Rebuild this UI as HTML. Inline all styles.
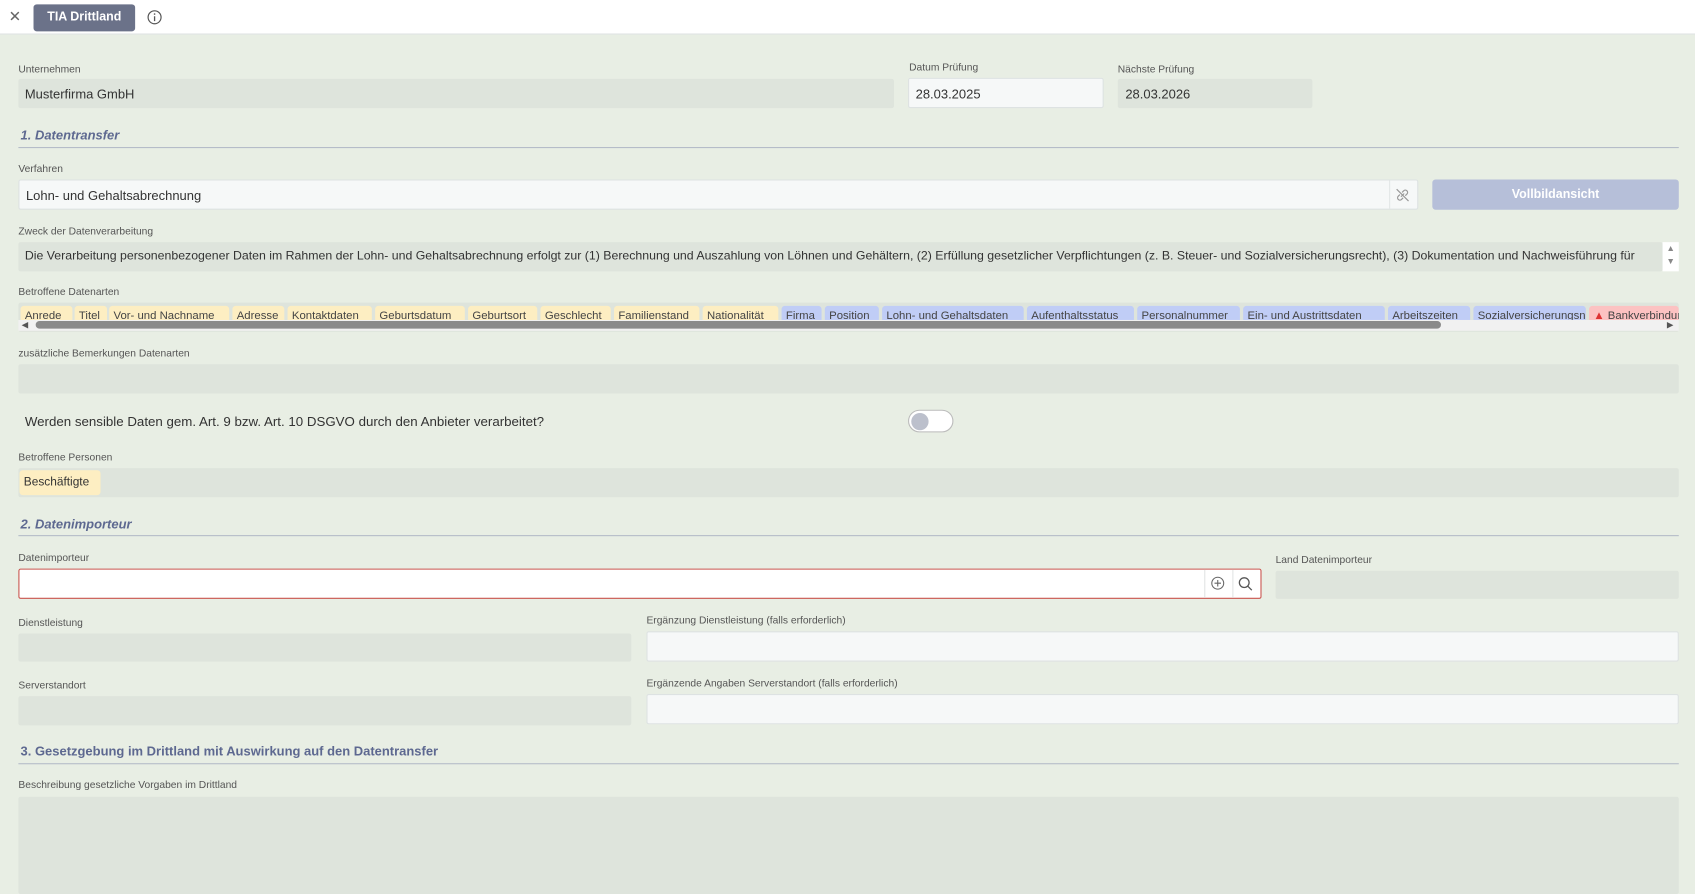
<!DOCTYPE html>
<html><head><meta charset="utf-8"><style>
*{box-sizing:border-box;margin:0;padding:0}
html,body{width:1695px;height:820px;overflow:hidden;background:#e8eee4}
#root{position:absolute;left:0;top:0;width:1568px;height:760px;transform:scale(1.081);transform-origin:0 0;font-family:"Liberation Sans",sans-serif;color:#333}
.a{position:absolute}
.top{left:0;top:0;width:1568px;height:32px;background:#fff;border-bottom:1px solid #dde2e0}
.lbl{font-size:9.5px;color:#555;white-space:nowrap}
.g{background:#dee4dc;border-radius:2px}
.w{background:#f6f8f8;border:1px solid #dde2e2;border-radius:2px}
.txt{font-size:12px;color:#333;white-space:nowrap}
.h{font-size:12px;font-weight:bold;font-style:italic;color:#5d6890}
.line{height:1px;background:#b4bcc8;left:17px;width:1536px}
.chip{top:283px;height:20px;border-radius:3px;font-size:10.5px;line-height:18px;padding-left:4px;overflow:hidden;white-space:nowrap;color:#444}
.y{background:#fdeec2}.b{background:#c0cdf6}.r{background:#fcc2c2}
</style></head><body><div id="root">
<div class="a top"></div>
<div class="a" style="left:8px;top:7px;font-size:14px;color:#666">✕</div>
<div class="a" style="left:31px;top:4px;width:94px;height:25px;background:#6b7289;border-radius:3px;color:#fff;font-weight:bold;font-size:11.5px;line-height:25px;text-align:center">TIA Drittland</div>
<svg class="a" style="left:136px;top:9px" width="14" height="14" viewBox="0 0 14 14"><circle cx="7" cy="7" r="6" fill="none" stroke="#555" stroke-width="1.1"/><line x1="7" y1="6" x2="7" y2="10.5" stroke="#555" stroke-width="1.2"/><circle cx="7" cy="4" r=".8" fill="#555"/></svg>

<div class="a lbl" style="left:17px;top:59px">Unternehmen</div>
<div class="a g" style="left:17px;top:73px;width:810px;height:27px"></div>
<div class="a txt" style="left:23px;top:80px">Musterfirma GmbH</div>
<div class="a lbl" style="left:841px;top:57px">Datum Prüfung</div>
<div class="a w" style="left:840px;top:72px;width:181px;height:28px"></div>
<div class="a txt" style="left:847px;top:80px">28.03.2025</div>
<div class="a lbl" style="left:1034px;top:59px">Nächste Prüfung</div>
<div class="a g" style="left:1034px;top:73px;width:180px;height:27px"></div>
<div class="a txt" style="left:1041px;top:80px">28.03.2026</div>

<div class="a h" style="left:19px;top:118px">1. Datentransfer</div>
<div class="a line" style="top:136px"></div>

<div class="a lbl" style="left:17px;top:151px">Verfahren</div>
<div class="a w" style="left:17px;top:166px;width:1295px;height:28px"></div>
<div class="a" style="left:1285px;top:167px;width:1px;height:26px;background:#e2e6e6"></div>
<svg class="a" style="left:1290px;top:173px" width="15" height="15" viewBox="0 0 15 15" fill="none" stroke="#999" stroke-width="1.1"><path d="M6 9l3-3M5 7L3.5 8.5a2 2 0 0 0 3 3L8 10M10 8l1.5-1.5a2 2 0 0 0-3-3L7 5M2 2l11 11"/></svg>
<div class="a txt" style="left:24px;top:174px">Lohn- und Gehaltsabrechnung</div>
<div class="a" style="left:1325px;top:166px;width:228px;height:28px;background:#b6bfd9;border-radius:3px;color:#fff;font-weight:bold;font-size:11.5px;line-height:28px;text-align:center">Vollbildansicht</div>

<div class="a lbl" style="left:17px;top:209px">Zweck der Datenverarbeitung</div>
<div class="a g" style="left:17px;top:224px;width:1521px;height:27px"></div>
<div class="a txt" style="left:23px;top:231px;width:1510px;overflow:hidden;font-size:11.4px">Die Verarbeitung personenbezogener Daten im Rahmen der Lohn- und Gehaltsabrechnung erfolgt zur (1) Berechnung und Auszahlung von Löhnen und Gehältern, (2) Erfüllung gesetzlicher Verpflichtungen (z. B. Steuer- und Sozialversicherungsrecht), (3) Dokumentation und Nachweisführung für</div>
<div class="a" style="left:1538px;top:224px;width:15px;height:27px;background:#fff;font-size:8px;color:#888;text-align:center;line-height:12px">▲<br>▼</div>

<div class="a lbl" style="left:17px;top:265px">Betroffene Datenarten</div>
<div class="a g" style="left:17px;top:280px;width:1536px;height:27px"></div>
<div class="a" style="left:17px;top:280px;width:1536px;height:16px;overflow:hidden">
<div style="position:relative;left:-17px;top:-280px">
<div class="a chip y" style="left:19px;width:48px">Anrede</div>
<div class="a chip y" style="left:69px;width:30px">Titel</div>
<div class="a chip y" style="left:101px;width:111px">Vor- und Nachname</div>
<div class="a chip y" style="left:215px;width:48px">Adresse</div>
<div class="a chip y" style="left:266px;width:78px">Kontaktdaten</div>
<div class="a chip y" style="left:347px;width:83px">Geburtsdatum</div>
<div class="a chip y" style="left:433px;width:64px">Geburtsort</div>
<div class="a chip y" style="left:500px;width:65px">Geschlecht</div>
<div class="a chip y" style="left:568px;width:79px">Familienstand</div>
<div class="a chip y" style="left:650px;width:70px">Nationalität</div>
<div class="a chip b" style="left:723px;width:37px">Firma</div>
<div class="a chip b" style="left:763px;width:50px">Position</div>
<div class="a chip b" style="left:816px;width:131px">Lohn- und Gehaltsdaten</div>
<div class="a chip b" style="left:950px;width:99px">Aufenthaltsstatus</div>
<div class="a chip b" style="left:1052px;width:95px">Personalnummer</div>
<div class="a chip b" style="left:1150px;width:131px">Ein- und Austrittsdaten</div>
<div class="a chip b" style="left:1284px;width:76px">Arbeitszeiten</div>
<div class="a chip b" style="left:1363px;width:104px">Sozialversicherungsnr.</div>
<div class="a chip r" style="left:1470px;width:83px"><span style="color:#d33">▲</span> Bankverbindung</div>
</div></div>
<div class="a" style="left:17px;top:296px;width:1536px;height:10px;background:#f1f1f1"></div>
<div class="a" style="left:33px;top:297px;width:1300px;height:7px;background:#8a8a8a;border-radius:4px"></div>
<div class="a" style="left:20px;top:296px;font-size:8px;color:#555">◀</div>
<div class="a" style="left:1542px;top:296px;font-size:8px;color:#555">▶</div>

<div class="a lbl" style="left:17px;top:322px">zusätzliche Bemerkungen Datenarten</div>
<div class="a g" style="left:17px;top:337px;width:1536px;height:27px"></div>

<div class="a" style="left:23px;top:383px;font-size:12.3px;color:#333">Werden sensible Daten gem. Art. 9 bzw. Art. 10 DSGVO durch den Anbieter verarbeitet?</div>
<div class="a" style="left:840px;top:379px;width:42px;height:21px;background:#fff;border:1px solid #bbb;border-radius:11px"></div>
<div class="a" style="left:843px;top:382px;width:16px;height:16px;background:#bcc0cc;border-radius:50%"></div>

<div class="a lbl" style="left:17px;top:418px">Betroffene Personen</div>
<div class="a g" style="left:17px;top:433px;width:1536px;height:27px"></div>
<div class="a" style="left:18px;top:435px;width:75px;height:23px;background:#fdeec2;border-radius:3px;font-size:11px;line-height:23px;padding-left:4px;color:#333">Beschäftigte</div>

<div class="a h" style="left:19px;top:478px">2. Datenimporteur</div>
<div class="a line" style="top:495px"></div>

<div class="a lbl" style="left:17px;top:511px">Datenimporteur</div>
<div class="a" style="left:17px;top:526px;width:1150px;height:28px;background:#fff;border:1px solid #c9544e;border-radius:2px"></div>
<div class="a" style="left:1114px;top:527px;width:1px;height:26px;background:#e2e4e4"></div>
<div class="a" style="left:1140px;top:527px;width:1px;height:26px;background:#e2e4e4"></div>
<svg class="a" style="left:1120px;top:533px" width="13" height="13" viewBox="0 0 13 13" fill="none" stroke="#666" stroke-width="1"><circle cx="6.5" cy="6.5" r="5.5"/><path d="M6.5 3.5v6M3.5 6.5h6"/></svg>
<svg class="a" style="left:1145px;top:533px" width="14" height="14" viewBox="0 0 14 14" fill="none" stroke="#555" stroke-width="1.2"><circle cx="6" cy="6" r="4.5"/><path d="M9.3 9.3L13 13"/></svg>
<div class="a lbl" style="left:1180px;top:513px">Land Datenimporteur</div>
<div class="a g" style="left:1180px;top:528px;width:373px;height:26px"></div>

<div class="a lbl" style="left:17px;top:571px">Dienstleistung</div>
<div class="a g" style="left:17px;top:586px;width:567px;height:26px"></div>
<div class="a lbl" style="left:598px;top:569px">Ergänzung Dienstleistung (falls erforderlich)</div>
<div class="a w" style="left:598px;top:584px;width:955px;height:28px"></div>

<div class="a lbl" style="left:17px;top:629px">Serverstandort</div>
<div class="a g" style="left:17px;top:644px;width:567px;height:27px"></div>
<div class="a lbl" style="left:598px;top:627px">Ergänzende Angaben Serverstandort (falls erforderlich)</div>
<div class="a w" style="left:598px;top:642px;width:955px;height:28px"></div>

<div class="a" style="left:19px;top:688px;font-size:12px;font-weight:bold;color:#5d6890">3. Gesetzgebung im Drittland mit Auswirkung auf den Datentransfer</div>
<div class="a line" style="top:706px"></div>

<div class="a lbl" style="left:17px;top:721px">Beschreibung gesetzliche Vorgaben im Drittland</div>
<div class="a g" style="left:17px;top:737px;width:1536px;height:90px"></div>
</div></body></html>
